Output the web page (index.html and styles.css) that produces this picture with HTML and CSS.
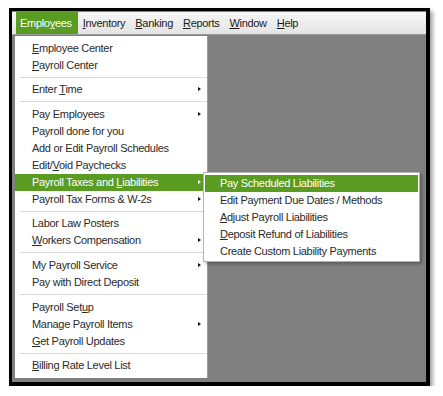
FILE: index.html
```html
<!DOCTYPE html>
<html lang="en">
<head>
  <meta charset="UTF-8">
  <title>Employees Menu</title>
  <link rel="stylesheet" href="styles.css">
</head>
<body>
  <div class="window">
    <div class="menubar">
      <span class="top-item active">Emplo<u>y</u>ees</span>
      <span class="top-item"><u>I</u>nventory</span>
      <span class="top-item"><u>B</u>anking</span>
      <span class="top-item"><u>R</u>eports</span>
      <span class="top-item"><u>W</u>indow</span>
      <span class="top-item"><u>H</u>elp</span>
    </div>
    <div class="workspace"></div>

    <ul class="dropdown">
      <li><u>E</u>mployee Center</li>
      <li><u>P</u>ayroll Center</li>
      <li class="sep"></li>
      <li class="has-sub">Enter <u>T</u>ime</li>
      <li class="sep"></li>
      <li class="has-sub">Pay Employees</li>
      <li>Payroll done for you</li>
      <li>Add or Edit Payroll Schedules</li>
      <li>Edit/<u>V</u>oid Paychecks</li>
      <li class="has-sub on">Payroll Taxes and <u>L</u>iabilities</li>
      <li class="has-sub">Payroll Tax Forms &amp; W-2s</li>
      <li class="sep"></li>
      <li>Labor Law Posters</li>
      <li class="has-sub"><u>W</u>orkers Compensation</li>
      <li class="sep"></li>
      <li class="has-sub">My Payroll Service</li>
      <li>Pay with Direct Deposit</li>
      <li class="sep"></li>
      <li>Payroll Set<u>u</u>p</li>
      <li class="has-sub">Manage Payroll Items</li>
      <li><u>G</u>et Payroll Updates</li>
      <li class="sep"></li>
      <li><u>B</u>illing Rate Level List</li>
    </ul>

    <ul class="submenu">
      <li class="on">Pay Scheduled Liabilities</li>
      <li>Edit Payment Due Dates / Methods</li>
      <li><u>A</u>djust Payroll Liabilities</li>
      <li><u>D</u>eposit Refund of Liabilities</li>
      <li>Create Custom Liability Payments</li>
    </ul>
  </div>
</body>
</html>
```

FILE: styles.css
```css
body {
    margin: 0;
    padding: 0;
    background-color: #ffffff;
    font-family: "Liberation Sans", Arial, sans-serif;
    font-size: 11px;
    color: #2a2a2a;
}
.window {
    position: relative;
    margin: 8px 0 0 9px;
    width: 421px;
    height: 378px;
    box-sizing: border-box;
    border: 3px solid #000000;
    border-right-width: 4px;
    border-bottom-width: 4px;
    box-shadow: 3px 3px 4px rgba(0, 0, 0, 0.35);
    display: flex;
    flex-direction: column;
    background-color: #808080;
}
.menubar {
    height: 24px;
    box-sizing: border-box;
    border-top: 1px solid #6f8596;
    border-bottom: 1px solid #9c9c9c;
    background: linear-gradient(#f6f6f6, #e4e4e4);
    display: flex;
    align-items: stretch;
    padding-left: 4px;
}
.top-item {
    padding: 0 5px;
    display: flex;
    align-items: center;
    letter-spacing: -0.3px;
    color: #1a1a1a;
}
.top-item.active {
    background-color: #5a9c22;
    color: #ffffff;
    padding: 0 6px 0 4px;
}
.workspace {
    flex: 1;
    background-color: #808080;
}
u {
    text-decoration-thickness: 1px;
    text-underline-offset: 1px;
}
.dropdown,
.submenu {
    position: absolute;
    margin: 0;
    list-style: none;
    background-color: #ffffff;
    box-sizing: border-box;
}
.dropdown {
    left: 3px;
    top: 25px;
    width: 193px;
    height: 342px;
    border-right: 1px solid #9a9a9a;
    padding: 3.5px 0;
}
.dropdown li,
.submenu li {
    height: 17px;
    line-height: 17px;
    padding-left: 17px;
    position: relative;
    letter-spacing: -0.3px;
    white-space: nowrap;
}
.dropdown li.sep {
    height: 7.67px;
    padding: 0;
    margin-left: 4px;
    background: linear-gradient(transparent 3.3px, #dadada 3.3px, #dadada 4.3px, transparent 4.3px);
}
.dropdown li.has-sub::after {
    content: "";
    position: absolute;
    right: 6px;
    top: 6px;
    border-left: 3px solid #111111;
    border-top: 2.5px solid transparent;
    border-bottom: 2.5px solid transparent;
}
.dropdown li.on,
.submenu li.on {
    background-color: #5a9c22;
    color: #ffffff;
}
.dropdown li.on::after {
    border-left-color: #ffffff;
}
.submenu {
    left: 191px;
    top: 161px;
    width: 217px;
    height: 90px;
    border: 1px solid #b4b4b4;
    padding: 1.5px 1px;
    box-shadow: 2px 2px 3px rgba(0, 0, 0, 0.3);
}
.submenu li {
    padding-left: 15px;
}
```
